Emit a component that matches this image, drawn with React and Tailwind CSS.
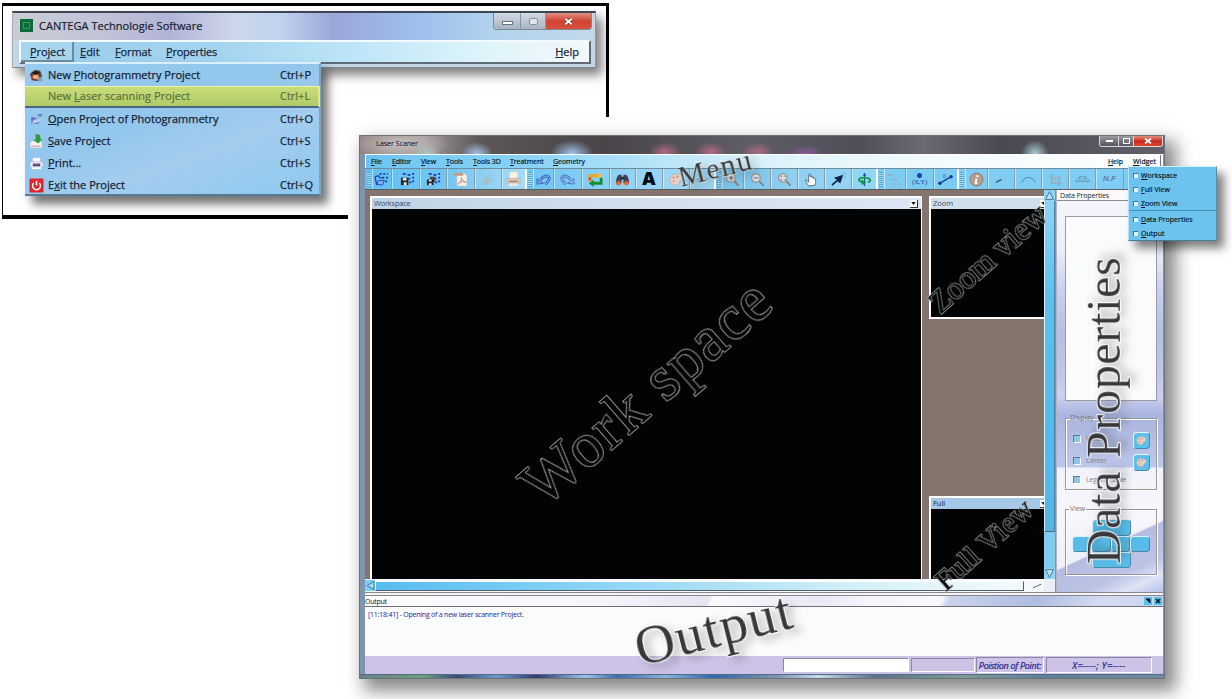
import React from "react";

const SANS = "font-['Open_Sans','Noto_Sans',sans-serif]";

function Mnemonic({ text, at = 0 }) {
  return (
    <span className="whitespace-nowrap">
      {text.slice(0, at)}
      <span className="underline underline-offset-1">{text[at]}</span>
      {text.slice(at + 1)}
    </span>
  );
}

/* ---------- launcher window ---------- */

function LaserIcon() {
  return (
    <svg viewBox="0 0 16 16" className="size-[15px]">
      <path d="M1 6 6 2l6 1 2 6-4 5-7-1z" fill="#5d4037" />
      <path d="M3 5l5-2 4 2-5 2z" fill="#1f1b1b" />
      <path d="M4 8l5-1 2 3-4 2-3-1z" fill="#f0b070" />
      <path d="M8 12l5-3 2 5h-5z" fill="#8da0b8" />
      <path d="M2 8l2 4" stroke="#c0392b" strokeWidth="1.5" />
    </svg>
  );
}
function OpenIcon() {
  return (
    <svg viewBox="0 0 16 16" className="size-[14px]">
      <path d="M1 6h4l1 1h6l-2 6-8 1z" fill="#5f74c4" />
      <path d="M4 9l10-3-3 5-9 3z" fill="#b9cdf5" />
      <path d="M8 3l6-1-2 4z" fill="#6478c0" />
    </svg>
  );
}
function SaveIcon() {
  return (
    <svg viewBox="0 0 16 16" className="size-[15px]">
      <path d="M1 9l3-2h8l2 3v5H1z" fill="#eef2f6" stroke="#aab6c4" strokeWidth=".6" />
      <path d="M2 13h10" stroke="#d68a96" />
      <path d="M7 0l5 1v4h2l-4 5-6-4h3z" fill="#2f9d3c" />
    </svg>
  );
}
function PrintIcon() {
  return (
    <svg viewBox="0 0 16 16" className="size-[15px]">
      <path d="M4 2h8v5H4z" fill="#fff" stroke="#c5cbd8" strokeWidth=".5" />
      <rect x="1" y="6" width="14" height="6" rx="2" fill="#eef0f6" stroke="#9aa6bd" strokeWidth=".5" />
      <path d="M4 8h8v3H4z" fill="#4a4a86" />
      <path d="M3 12h10v2H3z" fill="#fff" />
      <path d="M6 9h3" stroke="#c66" />
    </svg>
  );
}
function ExitIcon() {
  return (
    <svg viewBox="0 0 16 16" className="size-[15px]">
      <rect x=".5" y=".5" width="15" height="15" rx="1" fill="#e0252e" />
      <path d="M5 5.3a4.2 4.2 0 1 0 6 0" fill="none" stroke="#fff" strokeWidth="1.7" />
      <path d="M8 3v5" stroke="#fff" strokeWidth="1.7" />
    </svg>
  );
}

function LaunchRow({ icon, text, at, keys, active }) {
  return (
    <div
      className={
        active
          ? "mr-[-1px] flex h-[22px] items-center border-t border-r-2 border-b-2 border-t-[#eef2a0] border-r-[#dfe985] border-b-[#4a6482] bg-gradient-to-b from-[#c9dd78] to-[#aecb68] text-[#5c6f3c] [-webkit-text-stroke:0.2px_#5c6f3c]"
          : "flex h-[22px] items-center text-[#172434] [-webkit-text-stroke:0.25px_#172434]"
      }
    >
      <span className="flex w-[23px] justify-center">{icon}</span>
      <span className={active ? "flex-1 tracking-[0.005em]" : "flex-1 tracking-[0px]"}>
        <Mnemonic text={text} at={at} />
      </span>
      <span className={active ? "w-[38px]" : "w-[39px]"}>{keys}</span>
    </div>
  );
}

function Launcher() {
  return (
    <>
      <div className="absolute top-[3px] left-[2px] h-[114px] w-[607px] border-t-[3px] border-r-[3px] border-l-[1.5px] border-black bg-white" />
      <div className="absolute top-[110px] left-[2px] h-[109px] w-[346px] border-b-4 border-l-[1.5px] border-black bg-white" />
      <div className="absolute top-[11px] left-[12px] flex h-[57px] w-[584px] flex-col border-t-2 border-r border-b border-l border-t-[#3c4652] border-r-[#8c98a6] border-b-[#7c8894] border-l-[#a4acb4] bg-[#c3d6e6] shadow-[6px_7px_10px_rgba(0,0,0,0.5)]">
        <div className={"flex h-[27px] items-start bg-[linear-gradient(90deg,#c8ccd4_0%,#c2c4d6_14%,#b3b5d8_27%,#cdd6ea_38%,#c0d3ee_46%,#9aa6d8_55%,#a0c0ec_70%,#b0d2ee_82%,#c2d8e8_100%)] pl-[7px] text-[11px] text-[#16202c] [-webkit-text-stroke:0.2px_#16202c] " + SANS}>
          <span className="mt-[6px] flex h-[13px] w-[13px] items-center justify-center bg-[#0c6b38]">
            <span className="h-[7px] w-[7px] border border-[#2f9e60]" />
          </span>
          <span className="mt-[4px] ml-[6px] flex-1 leading-[17px] tracking-[0.003em] whitespace-nowrap">CANTEGA Technologie Software</span>
          <div className="mr-[3px] flex h-[17px] overflow-hidden rounded-b-[4px] border border-t-0 border-[#7d8894] text-white">
            <div className="flex w-[27px] items-center justify-center border-r border-[#8995a2] bg-gradient-to-b from-[#d3dbe4] to-[#a6b4c4]">
              <span className="mt-1 h-[4px] w-[11px] border border-[#687480] bg-white" />
            </div>
            <div className="flex w-[25px] items-center justify-center border-r border-[#8995a2] bg-gradient-to-b from-[#d3dbe4] to-[#a6b4c4]">
              <span className="h-[7px] w-[9px] rounded-[2px] border border-[#8492a2] bg-[#dfe6ee]" />
            </div>
            <div className="flex w-[45px] items-center justify-center bg-gradient-to-b from-[#e09080] via-[#cf4332] to-[#d9503c]">
              <svg viewBox="0 0 10 10" className="size-[9px]">
                <path d="M1.5 2l7 6M8.5 2l-7 6" stroke="#7c2b24" strokeWidth="3.6" />
                <path d="M1.5 2l7 6M8.5 2l-7 6" stroke="#fff" strokeWidth="2.2" />
              </svg>
            </div>
          </div>
        </div>
        <div className={"mr-[4px] ml-[6px] flex h-[24px] items-center border-t-2 border-r-2 border-b-2 border-l-2 border-t-[#f4fbff] border-r-[#5f6c78] border-b-[#5f6c78] border-l-[#f4fbff] bg-[linear-gradient(90deg,#98ccec_0%,#a4d4f0_35%,#bfe6f8_60%,#dcf3fa_80%,#f4f8fa_100%)] text-[11px] text-[#16283c] [-webkit-text-stroke:0.25px_#16283c] " + SANS}>
          <span className="flex h-[20px] w-[53px] items-center border-r-2 border-b-2 border-[#6d8ca2] bg-[#a9d6ef] pt-[2px] pl-[9px] tracking-[-0.01em]"><Mnemonic text="Project" /></span>
          <span className="w-[34px] pl-[6px]"><Mnemonic text="Edit" /></span>
          <span className="w-[52px] pl-[7px] tracking-[-0.01em]"><Mnemonic text="Format" /></span>
          <span className="flex-1 pl-[6px] tracking-[-0.02em]"><Mnemonic text="Properties" /></span>
          <span className="mr-[10px]"><Mnemonic text="Help" /></span>
        </div>
      </div>
      <div className={"absolute top-[62px] left-[25px] h-[134px] w-[296px] border-t-2 border-r-2 border-b-2 border-t-[#d9effb] border-r-[#7da6c4] border-b-[#557a96] bg-[linear-gradient(160deg,#98cbee_0%,#92c6ec_40%,#a2cdee_65%,#8fc8f0_100%)] text-[11px] shadow-[7px_8px_9px_rgba(0,0,0,0.55)] " + SANS}>
        <LaunchRow icon={<LaserIcon />} text="New Photogrammetry Project" at={4} keys="Ctrl+P" />
        <LaunchRow active text="New Laser scanning Project" at={4} keys="Ctrl+L" />
        <LaunchRow icon={<OpenIcon />} text="Open Project of Photogrammetry" at={0} keys="Ctrl+O" />
        <LaunchRow icon={<SaveIcon />} text="Save Project" at={0} keys="Ctrl+S" />
        <LaunchRow icon={<PrintIcon />} text="Print..." at={0} keys="Ctrl+S" />
        <LaunchRow icon={<ExitIcon />} text="Exit the Project" at={1} keys="Ctrl+Q" />
      </div>
    </>
  );
}

/* ---------- toolbar glyphs (16x16) ---------- */

const dots = <path d="M3 2h3M8 3h3M13 2h2M9 7h2M13 6h2M10 11h2M13 10h2" stroke="#1d35b0" strokeWidth="2" />;
const glass = (
  <>
    <path d="M9.5 9.5l5 5" stroke="#8a7f7c" strokeWidth="2" />
    <circle cx="6.3" cy="6.3" r="4.6" fill="#d9dfe2" stroke="#9b9290" strokeWidth="1.3" />
  </>
);
const ICONS = {
  open: <><path d="M6 2h2M10 2h2M14 2h1M9 6h2M13 6h2M12 10h2" stroke="#1d35b0" strokeWidth="2" /><path d="M1 5l4-1 1 2 4 0M1 5l2 9" fill="none" stroke="#2248b4" strokeWidth="1.500" /><path d="M3 13l2-4h6l-2 5z" fill="#86b4f0" stroke="#2248b4" strokeWidth="1" /></>,
  save: <>{dots}<path d="M1 6h8v8H1z" fill="#20242e" /><path d="M3 6h4v3H3zM4 11h3v3H4z" fill="#e8e4da" /></>,
  saveAll: <>{dots}<path d="M4 5h6v6H4z" fill="#4c4848" /><path d="M1 8h7v6H1z" fill="#20242e" /><path d="M3 8h3v2H3zM3 12h3v2H3z" fill="#e8e0c8" /></>,
  pdf: <><path d="M4 1h8l3 3v11H4z" fill="#f4f0ea" stroke="#b9b2aa" strokeWidth=".6" /><path d="M1 1h10v3H1z" fill="#c09c8c" /><path d="M9 6c0 4-2 6-4 7 2-3 6-3 9-2-3-1-5-3-5-5z" fill="none" stroke="#c58673" strokeWidth="1" /></>,
  faded: <><path d="M3 9c0-3 3-5 5-3l2 2-3 6-4-1z" fill="#a9bcc3" /><path d="M8 4h6M10 7h5M10 10h4M11 13h3" stroke="#a1b8c4" strokeWidth="1.4" strokeDasharray="1.6 1.6" /></>,
  print: <><path d="M4 0h8v7H4z" fill="#fdf0e0" /><path d="M1 7h14v5H1z" fill="#e4cfc0" stroke="#b39e92" strokeWidth=".6" /><path d="M3 9h10v2H3z" fill="#b08f80" /><path d="M3 12h10v3H3z" fill="#f2e4dc" /></>,
  undo: <><path d="M5 8c3-4 8-5 9-2 1 3-2 5-4 7" fill="none" stroke="#2c55b4" strokeWidth="3" /><path d="M5 8c3-4 8-5 9-2 1 3-2 5-4 7" fill="none" stroke="#78a8ea" strokeWidth="1.300" /><path d="M1 7v6l7-1z" fill="#6c9ce6" stroke="#2c55b4" strokeWidth=".8" /></>,
  redo: <><path d="M11 8C8 4 3 3 2 6c-1 3 2 5 4 7" fill="none" stroke="#4068b8" strokeWidth="3" /><path d="M11 8C8 4 3 3 2 6c-1 3 2 5 4 7" fill="none" stroke="#8ab6ec" strokeWidth="1.300" /><path d="M15 7v6l-7-1z" fill="#86b2ec" stroke="#4068b8" strokeWidth=".8" /></>,
  swap: <><path d="M2 10V4h9" fill="none" stroke="#f0a51e" strokeWidth="3" /><path d="M10 0l5 4-5 3z" fill="#ffba25" /><path d="M14 6v6H5" fill="none" stroke="#168e34" strokeWidth="3" /><path d="M6 8l-5 4 5 4z" fill="#168e34" /><path d="M2 9V6" stroke="#e0482b" strokeWidth="3" /></>,
  find: <><path d="M4 3h3v9H1c0-4 1-7 3-9zM9 3h3c2 2 3 5 3 9H9z" fill="#454150" /><path d="M6 5h4v3H6z" fill="#2e2d3c" /><circle cx="3.8" cy="12" r="2.4" fill="#e9642f" /><circle cx="12.2" cy="12" r="2.4" fill="#e9642f" /></>,
  palette: <><path d="M8 2c4 0 7 2 7 5s-4 2-4 4-1 3-4 3C3 14 1 11 1 8s3-6 7-6z" fill="#e9cfc2" stroke="#bf9f92" strokeWidth=".6" /><circle cx="5" cy="6" r="1.2" fill="#d88" /><circle cx="9" cy="5" r="1.2" fill="#8ab" /><circle cx="5" cy="10" r="1.2" fill="#ca8" /></>,
  dash: <path d="M2 9l4-2 4 2 4-2" fill="none" stroke="#8796a0" strokeWidth="1.3" />,
  zoomIn: <>{glass}<path d="M4 6.3h5M6.5 4v5" stroke="#4c5960" /></>,
  zoomOut: <>{glass}<path d="M4 6.3h5" stroke="#6b7378" /></>,
  zoomFit: <>{glass}<path d="M4.5 5.3v-1h1M8 4.3h1v1M4.500 7.500v1h1M8 8.500h1v-1" stroke="#4c5960" fill="none" strokeWidth=".8" /></>,
  hand: <path d="M5 15L2 10c-1-2 0-2 1-1l2 2V3c0-1.500 1.600-1.500 1.600 0V5c0-1.500 1.700-1.500 1.700 0v1c0-1.200 1.700-1.200 1.700 0v1c0-1.100 2-1.100 2 .2l.6 3c0 2-1 2-1 4z" fill="#fff" stroke="#434b57" strokeWidth=".8" />,
  arrow: <><path d="M1 14l8-7" stroke="#0c2448" strokeWidth="1.700" /><path d="M13 3L3 6l3 2 2 3 2 1z" fill="#0c2448" /><path d="M12 1h3v6" fill="none" stroke="#7098b0" strokeWidth=".8" strokeDasharray="1 1" /></>,
  rotate: <><path d="M8 1v14" stroke="#1f4f9e" strokeWidth="1.200" /><path d="M6 4l2-3 2 3z" fill="#1f4f9e" /><path d="M6 11C0 9 1 6 8 6c6 0 8 3 4 5" fill="none" stroke="#12954a" strokeWidth="2" /><path d="M5 8l5 3.500L5 14z" fill="#12954a" /></>,
  points: <path d="M1 3h4M5 8h3M9 8h2M7 13h2M11 13h3" stroke="#9c98a8" strokeWidth="1.500" strokeDasharray="1.500 1" />,
  segment: <><path d="M2 12l12-7" stroke="#14389c" strokeWidth="1.500" /><circle cx="2" cy="12" r="1.800" fill="#14389c" /><circle cx="14" cy="5" r="1.800" fill="#14389c" /><path d="M6 3h2v3H6z" fill="none" stroke="#4a70c0" strokeWidth=".7" /></>,
  info: <><circle cx="8" cy="8" r="7" fill="#b79c8d" stroke="#8f7a70" /><path d="M9 3.500v2M8 7l-1 5h2" fill="none" stroke="#fff" strokeWidth="2" /></>,
  line: <><path d="M2 11l6-3" stroke="#3d6478" strokeWidth="1.500" /><path d="M10 7l3-2" stroke="#8fb4c4" strokeWidth="1.200" /></>,
  arc: <path d="M1 11c3-7 11-7 14 0" fill="none" stroke="#4b7f9c" strokeWidth="1" />,
  crop: <path d="M1 6h13M4 2v10h11M12 4v11M7 8h2" fill="none" stroke="#96acb8" strokeWidth="1.500" />,
  mesh: <path d="M0 10l5-5h6l5 5zM5 5l3 5 3-5M5 5l-1 5M11 5l1 5" fill="none" stroke="#6d96aa" strokeWidth=".9" />,
};

function Tool({ name, className }) {
  return (
    <span className={"flex h-full shrink-0 items-center justify-center border-r border-[#8b9ca4] shadow-[inset_1px_0_0_rgba(255,255,255,0.5)] " + className}>
      {name === "A" ? (
        <span className="font-['Inter',sans-serif] text-[18px] leading-none font-black text-[#05080c]">A</span>
      ) : name === "XY" ? (
        <span className="flex flex-col items-center">
          <span className="size-[5px] rounded-full bg-[#1c41a4]" />
          <span className="font-['Liberation_Serif',serif] text-[7px] leading-[8px] tracking-[-0.04em] text-[#24469c]">(X,Y)</span>
        </span>
      ) : name === "NF" ? (
        <span className="font-['Liberation_Sans',sans-serif] text-[8px] font-bold text-[#648092] italic">N.F</span>
      ) : name ? (
        <svg viewBox="0 0 16 16" className="size-[15px] shrink-0">{ICONS[name]}</svg>
      ) : null}
    </span>
  );
}

function Grip() {
  return <span className="mx-[1px] h-[15px] w-[4px] shrink-0 bg-[repeating-linear-gradient(0deg,#5ba4ca_0_1px,#a0daf4_1px_2px)]" />;
}

function Toolbar() {
  return (
    <div className="flex h-[22px] items-center overflow-hidden border-t border-b border-t-[#6f8c9c] border-b-[#5c5f62] bg-[#80c9ee]">
      <div className="flex h-full w-[162px] items-center border-r-2 border-white bg-[linear-gradient(90deg,#62c0f2,#70c6f2_50%,#a8dcf6)] pl-[1px]">
        <Grip />
        <Tool name="open" className="w-[20px]" />
        <Tool name="save" className="w-[28px] pl-1" />
        <Tool name="saveAll" className="w-[27px]" />
        <Tool name="pdf" className="w-[28px]" />
        <Tool name="faded" className="w-[27px]" />
        <Tool name="print" className="w-[23px] border-r-0" />
      </div>
      <div className="flex h-full w-[189px] items-center border-r-2 border-white bg-[linear-gradient(90deg,#6fc5f2,#8fd2f5_50%,#a4daf6)]">
        <Grip />
        <Tool name="undo" className="w-[21px]" />
        <Tool name="redo" className="w-[28px]" />
        <Tool name="swap" className="w-[28px]" />
        <Tool name="find" className="w-[26px]" />
        <Tool name="A" className="w-[27px]" />
        <Tool name="palette" className="w-[27px]" />
        <Tool name="dash" className="w-[24px] border-r-0" />
      </div>
      <div className="flex h-full w-[162px] items-center border-r-2 border-white bg-[linear-gradient(90deg,#76c2e8,#8fd0f2_50%,#92d6f6)]">
        <Grip />
        <Tool name="zoomIn" className="w-[22px]" />
        <Tool name="zoomOut" className="w-[27px]" />
        <Tool name="zoomFit" className="w-[27px]" />
        <Tool name="hand" className="w-[27px]" />
        <Tool name="arrow" className="w-[27px]" />
        <Tool name="rotate" className="w-[24px] border-r-0" />
      </div>
      <div className="flex h-full w-[81px] items-center border-r-2 border-white bg-[#7ccbf2]">
        <Grip />
        <Tool name="points" className="w-[22px]" />
        <Tool name="XY" className="w-[28px]" />
        <Tool name="segment" className="w-[23px] border-r-0" />
      </div>
      <div className="flex h-full flex-1 items-center bg-[#80cdf4]">
        <Grip />
        <Tool name="info" className="w-[23px]" />
        <Tool name="line" className="w-[27px]" />
        <Tool name="arc" className="w-[27px]" />
        <Tool name="crop" className="w-[27px]" />
        <Tool name="mesh" className="w-[27px]" />
        <Tool name="NF" className="w-[28px]" />
      </div>
    </div>
  );
}

/* ---------- scanner window ---------- */

function DropButton() {
  return (
    <span className="flex h-[8px] w-[8px] items-center justify-center border-r border-b border-[#333] bg-white">
      <svg viewBox="0 0 6 4" className="h-[3px] w-[5px]"><path d="M0 0h6L3 4z" fill="#111" /></svg>
    </span>
  );
}

function SubWindow({ title, className, titleClass, textClass }) {
  return (
    <div className={"flex shrink-0 flex-col bg-white pt-[2px] pl-[2px] " + className}>
      <div className={"flex h-[11px] shrink-0 items-center justify-between pr-[3px] pl-[2px] " + titleClass}>
        <span className={"text-[7.5px] leading-[11px] " + textClass}>{title}</span>
        <DropButton />
      </div>
      <div className="flex-1 bg-[#020305]" />
    </div>
  );
}

function Check({ label }) {
  return (
    <div className="flex items-center gap-[6px]">
      <span className="size-[7px] border-t border-l border-[#597d92] bg-[#8dc6e8] shadow-[1px_1px_0_#fff]" />
      <span className="text-[7px] leading-none tracking-[-0.03em] text-[#848090]">{label}</span>
    </div>
  );
}

function ColorButton() {
  return (
    <span className="flex size-[17px] items-center justify-center rounded-[4px] border border-t-[#e6f8ff] border-r-[#4a88a8] border-b-[#4a88a8] border-l-[#e6f8ff] bg-[#5dc0ea]">
      <svg viewBox="0 0 16 16" className="size-[11px]">{ICONS.palette}</svg>
    </span>
  );
}

function Pad({ className }) {
  return <span className={"rounded-[4px] border border-t-[#d8f4ff] border-r-[#4c88a8] border-b-[#4c88a8] border-l-[#d8f4ff] bg-[#58bce8] " + className} />;
}

function GroupBox({ title, className, children }) {
  return (
    <fieldset className={"border border-[#9a979c] shadow-[inset_1px_1px_0_#fff,1px_1px_0_#fff] " + className}>
      <legend className="ml-[3px] px-[1px] text-[7px] leading-[8px] text-[#77727c]">{title}</legend>
      {children}
    </fieldset>
  );
}

function PropertiesPanel() {
  return (
    <aside className="ml-[1px] flex w-[107px] flex-col border-l border-[#b9b0c4] bg-[linear-gradient(155deg,transparent_84%,#b4bce0_84.5%,#bcc4e6_92%,#dfe4f5_96%,#b4c2e8_100%),linear-gradient(180deg,#f6f7fc_0px,#eceef8_60px,#c8cff0_100px,#b6bee4_145px,#c0c7ea_185px,#ccd1ee_205px,#a9b5e0_225px,#b4bee4_250px,#bcc8ec_277px,#f2f3fa_278px,#f6f6fb_320px,#ecedf7_402px)]">
      <div className="flex h-[11px] items-center border-b border-[#8a8a90] bg-[#fafafd] pl-[3px] text-[7px] leading-none tracking-[-0.02em] whitespace-nowrap text-[#1b1b22]">Data Properties</div>
      <div className="mt-[15px] mr-[6px] ml-[8px] h-[185px] border border-[#9b9ba6] bg-[#fafbfd]" />
      <GroupBox title="Display" className="mt-[13px] mr-[6px] ml-[8px] h-[76px]">
        <div className="flex justify-between pt-[10px] pr-[6px] pl-[7px]">
          <div className="flex flex-col gap-[15px] pt-[3px]">
            <Check label="Colour" />
            <Check label="Center" />
          </div>
          <div className="flex flex-col gap-[5px]">
            <ColorButton />
            <ColorButton />
          </div>
        </div>
        <div className="pt-[5px] pl-[7px]"><Check label="Legend Scale" /></div>
      </GroupBox>
      <GroupBox title="View" className="mt-[15px] mr-[6px] ml-[8px] h-[70px]">
        <div className="flex flex-col items-center pt-[6px]">
          <Pad className="h-[17px] w-[39px]" />
          <div className="flex">
            <Pad className="h-[16px] w-[19px]" />
            <Pad className="h-[16px] w-[20px]" />
            <Pad className="h-[16px] w-[19px]" />
            <Pad className="h-[16px] w-[20px]" />
          </div>
          <Pad className="h-[16px] w-[39px]" />
        </div>
      </GroupBox>
    </aside>
  );
}

function WidgetItem({ text }) {
  return (
    <div className="flex h-[14px] items-center gap-[3px] pl-[4px]">
      <span className="size-[5px] border-t border-l border-[#47758e] bg-[#dff2fb]" />
      <Mnemonic text={text} />
    </div>
  );
}

function Scanner() {
  return (
    <div className={"absolute top-[135px] left-[359px] flex h-[544px] w-[806px] flex-col border border-[#6d737b] bg-[#7f95ae] shadow-[8px_9px_16px_3px_rgba(60,60,60,0.6)] " + SANS}>
      <div className="flex h-[18px] shrink-0 items-start justify-between bg-[radial-gradient(ellipse_14px_10px_at_67px_18px,#a8c4c0,transparent),radial-gradient(ellipse_16px_12px_at_117px_18px,#a6c3e8,transparent),radial-gradient(ellipse_22px_14px_at_212px_18px,#a4c4ee,transparent),radial-gradient(ellipse_16px_10px_at_305px_16px,#b06a84,transparent),radial-gradient(ellipse_16px_10px_at_351px_16px,#b06a84,transparent),radial-gradient(ellipse_16px_10px_at_398px_16px,#b06a84,transparent),radial-gradient(ellipse_18px_8px_at_446px_17px,#865a98,transparent),radial-gradient(ellipse_14px_14px_at_675px_18px,#a8d0d8,transparent),radial-gradient(ellipse_50px_16px_at_40px_8px,#c8c0c0,transparent),linear-gradient(90deg,#8f8080_0%,#a19999_8%,#5c5658_15%,#484448_30%,#5e5c66_48%,#504e58_62%,#6a6974_70%,#4a4852_80%,#626068_100%)]">
        <span className="pt-[1px] pl-[16px] text-[7.5px] leading-[12px] tracking-[-0.03em] text-[#0e0e12]">Laser Scaner</span>
        <div className="mr-[1px] flex h-[11px] overflow-hidden rounded-b-[3px] border border-t-0 border-[#d6d8dc]">
          <span className="flex w-[19px] items-center justify-center border-r border-[#cfd2d6] bg-gradient-to-b from-[#9a9ca2] to-[#55575d]"><span className="h-[2px] w-[7px] bg-white" /></span>
          <span className="flex w-[15px] items-center justify-center border-r border-[#cfd2d6] bg-gradient-to-b from-[#9a9ca2] to-[#55575d]"><span className="h-[6px] w-[7px] border border-white" /></span>
          <span className="flex w-[28px] items-center justify-center bg-gradient-to-b from-[#e08a7c] via-[#c8281c] to-[#dc4630]">
            <svg viewBox="0 0 8 6" className="h-[6px] w-[8px]"><path d="M1 .5l6 5M7 .5l-6 5" stroke="#fff" strokeWidth="1.7" /></svg>
          </span>
        </div>
      </div>
      <div className="mr-[1px] ml-[5px] flex min-h-0 flex-1 flex-col">
        <nav className="flex h-[14px] shrink-0 items-center border-t border-l border-white bg-[linear-gradient(90deg,#6cc4f2_0%,#8ad2f6_20%,#b4e3f8_35%,#dcf2fa_50%,#f2fafc_70%,#fdfefe_100%)] pb-[1px] pl-[5px] text-[7px] leading-none tracking-[-0.01em] text-[#0c1a28] [-webkit-text-stroke:0.2px_#0c1a28]">
          <span className="w-[21px]"><Mnemonic text="File" /></span>
          <span className="w-[29px]"><Mnemonic text="Editor" /></span>
          <span className="w-[25px]"><Mnemonic text="View" /></span>
          <span className="w-[27px]"><Mnemonic text="Tools" /></span>
          <span className="w-[37px]"><Mnemonic text="Tools 3D" /></span>
          <span className="w-[43px]"><Mnemonic text="Treatment" /></span>
          <span className="flex-1"><Mnemonic text="Geometry" /></span>
          <span className="w-[20px]"><Mnemonic text="Help" /></span>
          <span className="mr-[2px] flex h-[12px] w-[33px] items-center border-r border-[#707a82] pl-[5px] tracking-[0.01em]"><Mnemonic text="Widget" /></span>
        </nav>
        <Toolbar />
        <div className="flex h-[402px] shrink-0">
          <div className="flex w-[679px] flex-col">
            <div className="flex h-[389px] bg-[#83756d] pt-[6px] pl-[5px]">
              <SubWindow title="Workspace" className="w-[552px] border-r border-white" titleClass="bg-[linear-gradient(90deg,#bfd3e4,#d3dfed_50%,#dbe6f2)]" textClass="tracking-[-0.03em] text-[#3c4a5c]" />
              <div className="ml-[7px] flex w-[115px] flex-col justify-between overflow-hidden">
                <SubWindow title="Zoom" className="h-[123px] w-[122px] border-b-2 border-white" titleClass="bg-[#cfe0ec]" textClass="text-[#3c4a5c]" />
                <SubWindow title="Full" className="h-[83px] w-[122px]" titleClass="bg-[#a6c8e6]" textClass="text-[#14223a]" />
              </div>
            </div>
            <div className="flex h-[13px] items-center bg-[#f6f7fa]">
              <span className="flex h-[11px] w-[10px] items-center justify-center bg-[#7cccf2]">
                <svg viewBox="0 0 8 8" className="size-[9px]"><path d="M7 .5v7L1 4z" fill="#a8def8" stroke="#44718c" strokeWidth=".8" /></svg>
              </span>
              <span className="h-[10px] w-[649px] border border-t-white border-r-[#54606a] border-b-[#54606a] border-l-white bg-[linear-gradient(90deg,#58bcf0_0%,#7ccdf4_25%,#a8dff6_50%,#d4f0f8_75%,#f2fafb_100%)]" />
              <svg viewBox="0 0 12 6" className="ml-[8px] h-[6px] w-[11px]"><path d="M1 5l9-4" stroke="#555" /></svg>
            </div>
          </div>
          <div className="flex w-[11px] flex-col">
            <span className="flex h-[11px] items-center justify-center bg-[#90d4f4]"><svg viewBox="0 0 8 8" className="size-[9px]"><path d="M4 .5L7.500 7.500h-7z" fill="#b6e5fa" stroke="#44718c" strokeWidth=".8" /></svg></span>
            <span className="h-[331px] border-r border-b border-l border-r-[#4a86a4] border-b-[#4a6a7c] border-l-[#dff3fc] bg-[linear-gradient(180deg,#8ed4f4,#5cbfee_30%,#52baee_80%,#58b4e2)]" />
            <span className="flex-1 bg-[#82cbf0]" />
            <span className="flex h-[11px] items-center justify-center bg-[#90d4f4]"><svg viewBox="0 0 8 8" className="size-[9px]"><path d="M4 7.500L.5 .5h7z" fill="#b6e5fa" stroke="#44718c" strokeWidth=".8" /></svg></span>
            <span className="h-[13px] bg-[#eceef6]" />
          </div>
          <PropertiesPanel />
        </div>
        <div className="h-[4px] shrink-0 border-t border-b border-[#8a8588] bg-[#f4f5f8]" />
        <div className="flex h-[11px] shrink-0 items-center justify-between border-b border-[#6f7076] bg-[linear-gradient(115deg,#fbfbfd_0%,#f6f5fb_30%,#e6e3f3_43%,#fafafd_43.5%,#ebe8f6_57%,#f4f5fa_63%,#f8f9fc_72%,#cbd3ec_73%,#aebde2_84%,#d5dcf0_92%,#c8d4ee_100%)]">
          <span className="text-[7px] leading-none tracking-[-0.04em] text-[#15151a]">Output</span>
          <span className="flex gap-[2px] pr-[1px]">
            <svg viewBox="0 0 8 8" className="size-[8px] bg-[#58c2ea]"><path d="M2 2h4v4z" stroke="#06202e" fill="#06202e" /></svg>
            <svg viewBox="0 0 8 8" className="size-[8px] bg-[#58c2ea]"><path d="M2 2l4 4M6 2L2 6" stroke="#06202e" strokeWidth="1.700" /></svg>
          </span>
        </div>
        <div className="flex-1 bg-[#fafbfd] pt-[3px] pl-[3px] text-[7px] leading-[10px] tracking-[-0.032em] text-[#1c1c96]">[11:18:41] - Opening of a new laser scanner Project.</div>
        <div className="flex h-[18px] shrink-0 items-center justify-end bg-[#cdc3e6] pr-[11px] text-[9px] leading-none text-[#22228a] italic [-webkit-text-stroke:0.2px_#22228a]">
          <span className="mr-[2px] h-[14px] w-[126px] border border-[#8d869c] border-r-white border-b-white bg-white" />
          <span className="mr-[1px] h-[14px] w-[64px] border border-[#8d869c] border-r-white border-b-white" />
          <span className="mr-[2px] flex h-[16px] w-[68px] items-center justify-center border border-[#8d869c] border-r-white border-b-white tracking-[-0.03em] whitespace-nowrap">Poistion of Point:</span>
          <span className="flex h-[16px] w-[106px] items-center justify-center border border-[#8d869c] border-r-white border-b-white tracking-[0.055em]">X=----; Y=----</span>
        </div>
      </div>
      <div className="h-[4px] shrink-0 border-t border-[#546a88] bg-[linear-gradient(90deg,#6c8088,#6aa07c_8%,#3a4a74_12%,#6a9ad0_17%,#30386c_22%,#9ac4e8_28%,#3f6cae_32%,#86b4dc_38%,#2f66ac_44%,#7f95ae_52%,#c8dcec_57%,#5c7088_64%,#7c9c92_75%,#5d8098_85%,#6f8c9c)]" />
    </div>
  );
}

/* Rotated captions: transform origin sits on the start of the baseline. */
const CAPTION = "pointer-events-none absolute origin-[0_83.75%] leading-none whitespace-nowrap font-['Liberation_Serif',serif] will-change-transform [paint-order:stroke_fill] ";
const HOLLOW = "text-[#030405] ";
const SOLID = "text-[#38373b] drop-shadow-[5px_5px_4px_rgba(0,0,0,0.22)] ";

export default function App() {
  return (
    <main className="relative h-[699px] w-[1232px] overflow-hidden bg-white">
      <Launcher />
      <Scanner />
      <div className={"absolute top-[166px] left-[1128px] w-[89px] border border-t-[#d8f0fb] border-r-[#5c8ca6] border-b-[#4a7c98] border-l-[#b8e2f6] bg-[#6cc4ee] text-[7px] leading-none tracking-[0.005em] text-[#0c1a28] shadow-[7px_7px_9px_rgba(0,0,0,0.5)] [-webkit-text-stroke:0.2px_#0c1a28] " + SANS}>
        <div className="pt-[1px]">
          <WidgetItem text="Workspace" />
          <WidgetItem text="Full View" />
          <WidgetItem text="Zoom View" />
        </div>
        <div className="border-t border-[#4a8cac] pt-[1px]">
          <WidgetItem text="Data Properties" />
          <WidgetItem text="Output" />
        </div>
      </div>
      <div className={CAPTION + HOLLOW + "top-[457px] left-[544px] -rotate-[41deg] text-[63px] tracking-[1.5px] [-webkit-text-stroke:1.6px_#b4b4b4]"}>Work space</div>
      <div className={CAPTION + HOLLOW + "top-[288px] left-[940px] -rotate-[41.5deg] text-[32px] tracking-[0px] [-webkit-text-stroke:1.4px_#a0a0a0]"}>Zoom view</div>
      <div className={CAPTION + HOLLOW + "top-[568px] left-[946px] -rotate-[42deg] text-[29px] tracking-[0.7px] [-webkit-text-stroke:1.4px_#a0a0a0]"}>Full View</div>
      <div className={CAPTION + SOLID + "top-[162px] left-[681px] -rotate-[14deg] text-[30px] tracking-[1.5px] [-webkit-text-stroke:1px_#e4f2f8]"}>Menu</div>
      <div className={CAPTION + SOLID + "top-[620px] left-[640px] -rotate-[14deg] text-[55px] tracking-[1.4px] [-webkit-text-stroke:2px_#ffffff]"}>Output</div>
      <div className={CAPTION + SOLID + "top-[524px] left-[1120px] -rotate-90 text-[48px] tracking-[0.7px] [-webkit-text-stroke:2px_#ffffff]"}>Data Properties</div>
    </main>
  );
}
